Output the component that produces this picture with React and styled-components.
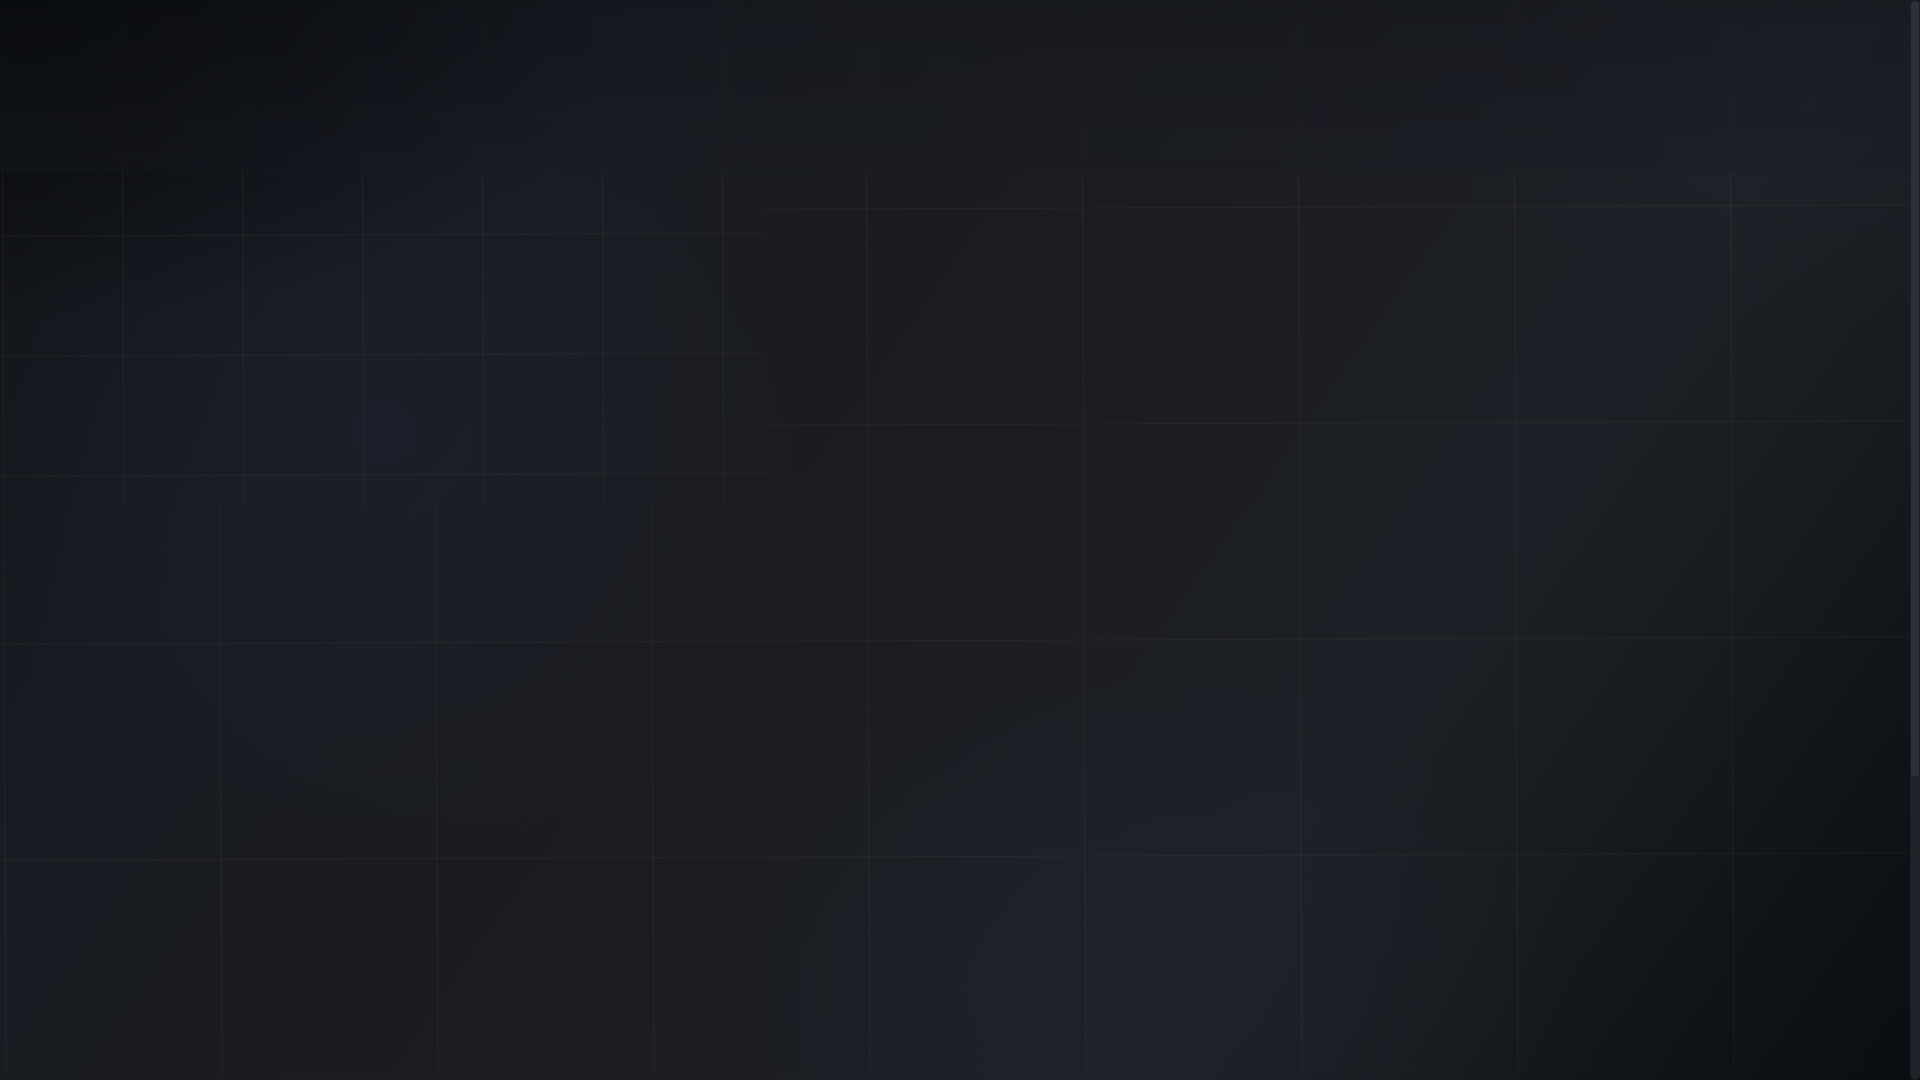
import React from "react";
import styled, { createGlobalStyle } from "styled-components";

const LINE = "rgba(160, 138, 80, 0.085)";

const GlobalStyle = createGlobalStyle`
  html, body {
    margin: 0;
    padding: 0;
  }
  html {
    background-color: #16181d;
  }
  body {
    font-family: Inter, "Noto Sans", sans-serif;
    color: #e6e8ec;
    overflow-x: hidden;
    background:
      radial-gradient(ellipse 34% 30% at 0% 0%, rgba(7, 9, 12, 0.95) 0%, rgba(7, 9, 12, 0) 100%),
      radial-gradient(ellipse 22% 40% at 20% 40%, rgba(30, 34, 48, 0.5) 0%, rgba(30, 34, 48, 0) 100%),
      radial-gradient(ellipse 22% 28% at 60% 90%, rgba(32, 37, 48, 0.5) 0%, rgba(32, 37, 48, 0) 100%),
      radial-gradient(ellipse 20% 20% at 95% 10%, rgba(32, 36, 44, 0.45) 0%, rgba(32, 36, 44, 0) 100%),
      linear-gradient(125deg, #111317 0%, #181b22 22%, #1b1c20 42%, #1c1e24 58%, #1d2026 70%, #181c20 80%, #101317 90%, #0a0d11 100%);
    background-attachment: fixed;
  }
`;

const gridLines = (size) => `
  background-image:
    linear-gradient(to right, ${LINE} 1px, transparent 1px),
    linear-gradient(to bottom, ${LINE} 1px, transparent 1px);
  background-size: ${size}px ${size}px;
`;

const Header = styled.header`
  position: fixed;
  top: 0;
  left: 0;
  right: 0;
  height: 172px;
  z-index: 10;
  background: linear-gradient(
    to bottom,
    rgba(16, 19, 24, 0.35) 0%,
    rgba(26, 29, 37, 0.25) 100%
  );
  backdrop-filter: blur(6px);
`;

/* the page's own scrollbar, drawn over the right edge */
const ScrollRail = styled.div`
  position: fixed;
  top: 0;
  right: 0;
  width: 10px;
  height: 100vh;
  z-index: 20;
  background: #1d2128;
  border-radius: 5px;
`;

const ScrollThumb = styled.div`
  height: 778px;
  box-sizing: border-box;
  background: #2c3139;
  border: 1px solid #1a1d23;
  border-radius: 5px;
`;

const Hero = styled.section`
  height: 1072px;
  display: grid;
  grid-template-columns: 765px 1fr;
  grid-template-rows: 503px 1fr;
  transform: rotate(-0.22deg);
  transform-origin: 50% 40%;
`;

const SmallGrid = styled.div`
  ${gridLines(120)}
  background-position: 3px -8px;
`;

const BigGrid = styled.div`
  ${gridLines(216)}
  background-position: ${(p) => p.$offset};
  grid-column: ${(p) => p.$column};
`;

const Below = styled.section`
  height: 428px;
`;

export default function App() {
  return (
    <>
      <GlobalStyle />
      <Header />
      <ScrollRail>
        <ScrollThumb />
      </ScrollRail>
      <Hero>
        <SmallGrid />
        <BigGrid $offset="102px -8px" $column="2" />
        <BigGrid $offset="3px 137px" $column="1 / 3" />
      </Hero>
      <Below />
    </>
  );
}
